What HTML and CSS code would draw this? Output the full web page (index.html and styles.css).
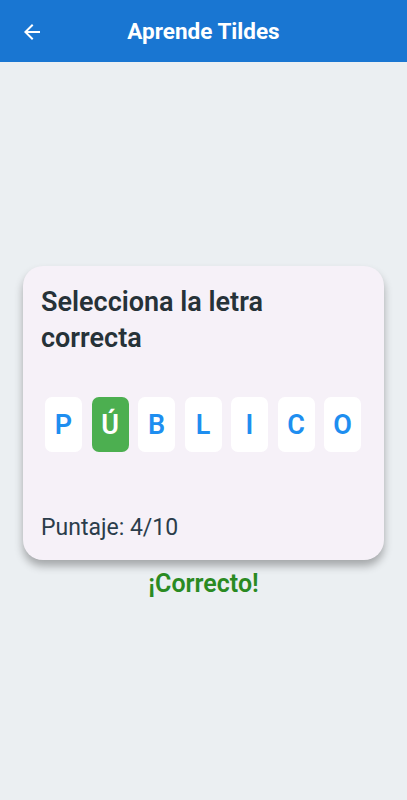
FILE: index.html
```html
<!DOCTYPE html>
<html lang="es">
<head>
    <meta charset="UTF-8">
    <meta name="viewport" content="width=device-width, initial-scale=1.0">
    <title>Aprende Tildes</title>
    <link rel="stylesheet" href="styles.css">
</head>
<body>

    <header class="barra">
        <button class="volver" aria-label="Volver">
            <svg width="24" height="24" viewBox="0 0 24 24">
                <path d="M20 11H7.83l5.59-5.59L12 4l-8 8 8 8 1.41-1.41L7.83 13H20v-2z" fill="#fff"/>
            </svg>
        </button>
        <h1>Aprende Tildes</h1>
    </header>

    <main class="contenido">
        <section class="tarjeta">
            <h2>Selecciona la letra correcta</h2>

            <div class="letras">
                <span class="letra">P</span>
                <span class="letra acierto">Ú</span>
                <span class="letra">B</span>
                <span class="letra">L</span>
                <span class="letra">I</span>
                <span class="letra">C</span>
                <span class="letra">O</span>
            </div>

            <p class="puntaje">Puntaje: 4/10</p>
        </section>

        <p class="mensaje">¡Correcto!</p>
    </main>

</body>
</html>
```

FILE: styles.css
```css
body{
  margin: 0;
  font-family: Roboto, 'Noto Sans', sans-serif;
  background: #ebeff2;
  color: #263238;
}

.barra{
  height: 62px;
  background: #1976d2;
  display: flex;
  align-items: center;
  position: relative;
  justify-content: center;
}

.volver{
  position: absolute;
  left: 20px;
  top: 20px;
  background: none;
  border: none;
  padding: 0;
  width: 24px;
  height: 24px;
}

.barra h1{
  margin: 0;
  color: white;
  font-size: 22.5px;
  font-weight: 700;
}

.contenido{
  display: flex;
  flex-direction: column;
  align-items: center;
  padding-top: 204px;
}

.tarjeta{
  box-sizing: border-box;
  width: 361px;
  height: 294px;
  background: #f6f1f8;
  border-radius: 20px;
  padding: 18px 18px 0;
  box-shadow: 0 6px 8px rgba(0, 0, 0, 0.3);
}

.tarjeta h2{
  margin: 0;
  font-size: 27px;
  font-weight: 600;
  line-height: 36px;
  padding-right: 60px;
}

.letras{
  display: flex;
  gap: 9.5px;
  margin: 41px 0 0 4px;
}

.letra{
  width: 37px;
  height: 55px;
  border-radius: 7px;
  background: white;
  color: #1e8ef0;
  font-size: 27px;
  font-weight: 600;
  display: flex;
  align-items: center;
  justify-content: center;
}

.letra.acierto{
  background: #4caf50;
  color: white;
}

.puntaje{
  margin: 62px 0 0;
  font-size: 23px;
  color: #2b3d4b;
}

.mensaje{
  margin: 9px 0 0;
  color: #2a8a22;
  font-size: 25px;
  font-weight: 600;
}
```
